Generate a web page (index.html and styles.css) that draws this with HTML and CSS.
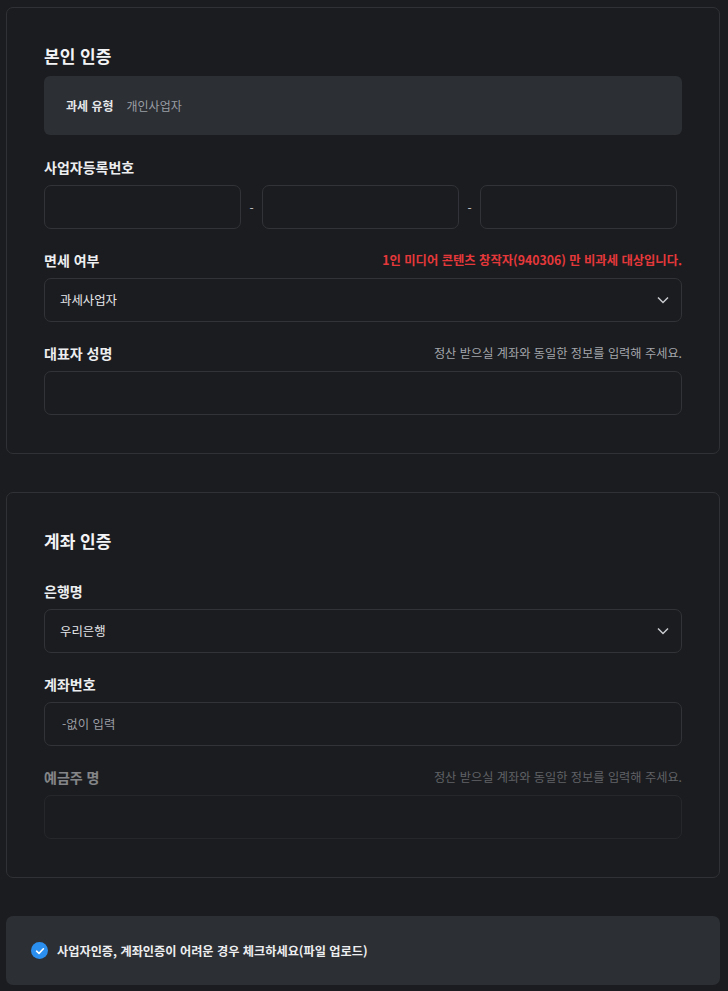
FILE: index.html
```html
<!DOCTYPE html>
<html lang="ko">
<head>
<meta charset="utf-8">
<title>인증</title>
<link rel="stylesheet" href="styles.css">
</head>
<body>
<div class="page">
  <section class="card">
    <h2 class="card-title">본인 인증</h2>
    <div class="info-box">
      <span class="info-label">과세 유형</span>
      <span class="info-value">개인사업자</span>
    </div>

    <div class="field">
      <div class="field-head"><span class="field-label">사업자등록번호</span></div>
      <div class="biz-row">
        <input class="input input-biz" type="text">
        <span class="dash">-</span>
        <input class="input input-biz" type="text">
        <span class="dash">-</span>
        <input class="input input-biz" type="text">
      </div>
    </div>

    <div class="field">
      <div class="field-head">
        <span class="field-label">면세 여부</span>
        <span class="field-note note-red">1인 미디어 콘텐츠 창작자(940306) 만 비과세 대상입니다.</span>
      </div>
      <div class="select">
        <span class="select-value">과세사업자</span>
        <svg class="chevron" width="12" height="8" viewBox="0 0 12 8"><path d="M1 1.5 L6 6.5 L11 1.5" fill="none" stroke="#c9cbcf" stroke-width="1.5"/></svg>
      </div>
    </div>

    <div class="field">
      <div class="field-head">
        <span class="field-label">대표자 성명</span>
        <span class="field-note">정산 받으실 계좌와 동일한 정보를 입력해 주세요.</span>
      </div>
      <input class="input" type="text">
    </div>
  </section>

  <section class="card">
    <h2 class="card-title">계좌 인증</h2>

    <div class="field field-first">
      <div class="field-head"><span class="field-label">은행명</span></div>
      <div class="select">
        <span class="select-value">우리은행</span>
        <svg class="chevron" width="12" height="8" viewBox="0 0 12 8"><path d="M1 1.5 L6 6.5 L11 1.5" fill="none" stroke="#c9cbcf" stroke-width="1.5"/></svg>
      </div>
    </div>

    <div class="field">
      <div class="field-head"><span class="field-label">계좌번호</span></div>
      <input class="input" type="text" placeholder="-없이 입력">
    </div>

    <div class="field field-disabled">
      <div class="field-head">
        <span class="field-label">예금주 명</span>
        <span class="field-note">정산 받으실 계좌와 동일한 정보를 입력해 주세요.</span>
      </div>
      <input class="input" type="text" disabled>
    </div>
  </section>

  <div class="check-box">
    <span class="check-circle">
      <svg width="16" height="16" viewBox="0 0 16 16"><path d="M4.6 8.2 L7 10.4 L11.4 5.8" fill="none" stroke="#ffffff" stroke-width="1.6" stroke-linecap="round" stroke-linejoin="round"/></svg>
    </span>
    <span class="check-text">사업자인증, 계좌인증이 어려운 경우 체크하세요(파일 업로드)</span>
  </div>
</div>
</body>
</html>
```
FILE: styles.css
```css
* { box-sizing: border-box; }

body {
  margin: 0;
  background: #1b1c1f;
  font-family: "Noto Sans CJK KR", "Noto Sans", sans-serif;
  color: #e8e9eb;
}

.page {
  padding: 7px 8px 8px 6px;
  display: flex;
  flex-direction: column;
  gap: 38px;
}

.card {
  border: 1px solid #2f3136;
  border-radius: 7px;
  padding: 36px 37px 38px 37px;
}

.card-title {
  margin: 0;
  font-size: 17px;
  line-height: 24px;
  font-weight: 700;
  color: #f3f4f6;
}

.info-box {
  margin-top: 8px;
  height: 59px;
  background: #2c2f34;
  border-radius: 6px;
  padding: 0 22px;
  display: flex;
  align-items: center;
  gap: 13px;
  font-size: 12px;
}

.info-label {
  font-weight: 700;
  color: #e6e7ea;
}

.info-value {
  color: #9a9ea5;
}

.field {
  margin-top: 21px;
  display: flex;
  flex-direction: column;
  gap: 8px;
}

.info-box + .field { margin-top: 22px; }
.field-first { margin-top: 28px; }

.field-head {
  height: 20px;
  display: flex;
  align-items: center;
  justify-content: space-between;
}

.field-label {
  font-size: 14px;
  font-weight: 700;
  color: #eceef0;
}

.field-note {
  font-size: 12.2px;
  color: #a3a6ac;
}

.note-red {
  font-size: 12.3px;
  color: #e5383b;
  font-weight: 700;
}

.input {
  display: block;
  width: 100%;
  height: 44px;
  margin: 0;
  border: 1px solid #313338;
  border-radius: 7px;
  background: transparent;
  padding: 0 17px;
  font: inherit;
  font-size: 12.4px;
  color: #e4e5e8;
  outline: none;
}

.input::placeholder {
  color: #9a9da3;
}

.biz-row {
  display: flex;
  align-items: center;
}

.input-biz {
  width: 197px;
  flex: none;
}

.dash {
  width: 21px;
  text-align: center;
  font-size: 12px;
  color: #c5c7cb;
}

.select {
  height: 44px;
  border: 1px solid #313338;
  border-radius: 7px;
  padding: 0 12px 0 15px;
  display: flex;
  align-items: center;
  justify-content: space-between;
}

.select-value {
  font-size: 12.4px;
  color: #e6e7ea;
}

.chevron {
  display: block;
}

.field-disabled {
  opacity: 0.5;
}

.check-box {
  height: 69px;
  background: #2c2f34;
  border-radius: 7px;
  padding: 0 25px;
  display: flex;
  align-items: center;
  gap: 9px;
}

.check-circle {
  width: 17px;
  height: 17px;
  border-radius: 50%;
  background: #2b8ff0;
  display: flex;
  align-items: center;
  justify-content: center;
}

.check-circle svg { display: block; }

.check-text {
  font-size: 12.2px;
  font-weight: 700;
  color: #eceef0;
}
```
